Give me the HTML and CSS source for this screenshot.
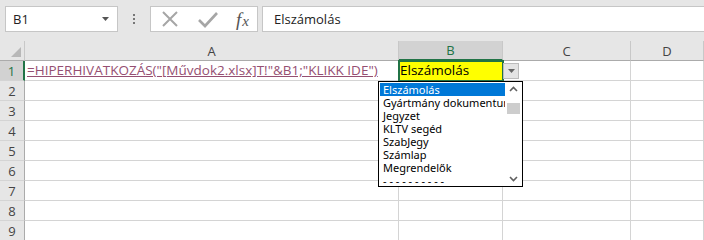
FILE: index.html
```html
<!DOCTYPE html>
<html>
<head>
  <title>Munkafüzet</title>
  <link rel="stylesheet" href="styles.css">
</head>
<body>
  <div class="toolbar">
    <div class="namebox">
      <span>B1</span>
      <svg class="nb-arrow" width="8" height="5" viewBox="0 0 8 5"><path d="M0 0h7L3.5 4z" fill="#555"/></svg>
    </div>
    <div class="grip"><i></i><i></i><i></i></div>
    <div class="fxbox">
      <svg width="18" height="18" viewBox="0 0 18 18"><path d="M2 2L16 16M16 2L2 16" stroke="#a6a6a6" stroke-width="2"/></svg>
      <svg width="22" height="18" viewBox="0 0 22 18"><path d="M2 10l6 6L20 3" stroke="#a6a6a6" stroke-width="2.6" fill="none"/></svg>
      <span class="fx"><i>f</i><i>x</i></span>
    </div>
    <div class="formula">Elszámolás</div>
  </div>

  <div class="sheet">
    <div class="corner"><svg width="10" height="10" viewBox="0 0 10 10"><path d="M10 0V10H0z" fill="#b8b8b8"/></svg></div>
    <div class="colhead">A</div>
    <div class="colhead active">B</div>
    <div class="colhead">C</div>
    <div class="colhead">D</div>

    <div class="rowhead active">1</div>
    <div class="cell"><span class="link">=HIPERHIVATKOZÁS("[Művdok2.xlsx]T!"&amp;B1;"KLIKK IDE")</span></div>
    <div class="cell selected">Elszámolás</div>
    <div class="cell"></div>
    <div class="cell"></div>

    <div class="rowhead">2</div><div class="cell"></div><div class="cell"></div><div class="cell"></div><div class="cell"></div>
    <div class="rowhead">3</div><div class="cell"></div><div class="cell"></div><div class="cell"></div><div class="cell"></div>
    <div class="rowhead">4</div><div class="cell"></div><div class="cell"></div><div class="cell"></div><div class="cell"></div>
    <div class="rowhead">5</div><div class="cell"></div><div class="cell"></div><div class="cell"></div><div class="cell"></div>
    <div class="rowhead">6</div><div class="cell"></div><div class="cell"></div><div class="cell"></div><div class="cell"></div>
    <div class="rowhead">7</div><div class="cell"></div><div class="cell"></div><div class="cell"></div><div class="cell"></div>
    <div class="rowhead">8</div><div class="cell"></div><div class="cell"></div><div class="cell"></div><div class="cell"></div>
    <div class="rowhead">9</div><div class="cell"></div><div class="cell"></div><div class="cell"></div><div class="cell"></div>

    <!-- validation dropdown button and list float over the grid -->
    <div class="dd-button">
      <svg width="7" height="4" viewBox="0 0 7 4"><path d="M0 0h7L3.5 4z" fill="#666"/></svg>
    </div>
    <div class="dd-list">
      <ul>
        <li class="hl">Elszámolás</li>
        <li>Gyártmány dokumentum</li>
        <li>Jegyzet</li>
        <li>KLTV segéd</li>
        <li>SzabJegy</li>
        <li>Számlap</li>
        <li>Megrendelők</li>
        <li>- - - - - - - - - -</li>
      </ul>
      <div class="scroll">
        <svg width="9" height="6" viewBox="0 0 9 6"><path d="M1 5L4.5 1.5L8 5" stroke="#606060" stroke-width="1.6" fill="none"/></svg>
        <div class="track"><div class="thumb"></div></div>
        <svg width="9" height="6" viewBox="0 0 9 6"><path d="M1 1L4.5 4.5L8 1" stroke="#606060" stroke-width="1.6" fill="none"/></svg>
      </div>
    </div>
  </div>
</body>
</html>
```

FILE: styles.css
```css
body {
  margin: 0;
  font-family: "Open Sans", "Noto Sans", sans-serif;
  background: #fff;
  width: 704px;
  height: 240px;
  overflow: hidden;
}

.toolbar {
  height: 41px;
  background: #e6e6e6;
  display: flex;
  align-items: flex-start;
  padding-top: 6px;
  box-sizing: border-box;
}

.namebox {
  margin-left: 5px;
  width: 113px;
  height: 26px;
  box-sizing: border-box;
  background: #fff;
  border: 1px solid #c6c6c6;
  display: flex;
  align-items: center;
  justify-content: space-between;
  padding: 0 7px 0 7px;
  font-size: 13px;
  color: #222;
}

.grip {
  width: 32px;
  height: 26px;
  display: flex;
  flex-direction: column;
  align-items: center;
  justify-content: center;
  gap: 2px;
}

.grip i {
  width: 2px;
  height: 2px;
  background: #777;
}

.fxbox {
  width: 108px;
  height: 26px;
  box-sizing: border-box;
  background: #fff;
  border: 1px solid #c6c6c6;
  display: flex;
  align-items: center;
  justify-content: space-between;
  padding: 0 8px 0 10px;
}

.fx {
  font-family: "Liberation Serif", serif;
  font-size: 19px;
  color: #555;
  font-style: italic;
  line-height: 1;
}

.fx i + i {
  font-size: 15px;
  margin-left: 1px;
}

.formula {
  margin-left: 4px;
  flex: 1;
  height: 26px;
  box-sizing: border-box;
  background: #fff;
  border: 1px solid #c6c6c6;
  border-right: none;
  padding-left: 11px;
  font-size: 13px;
  line-height: 24px;
  color: #222;
}

.sheet {
  position: relative;
  display: grid;
  grid-template-columns: 25px 374px 104px 128px 1fr;
  grid-template-rows: 20px repeat(9, 20px);
}

.corner,
.colhead,
.rowhead {
  background: #e6e6e6;
  border-right: 1px solid #c8c8c8;
  border-bottom: 1px solid #ababab;
  box-sizing: border-box;
  font-size: 13px;
  color: #444;
  display: flex;
  align-items: center;
  justify-content: center;
}

.corner {
  align-items: flex-end;
  justify-content: flex-end;
  padding: 0 3px 3px 0;
}

.colhead.active {
  background: #d2d2d2;
  color: #217346;
  border-bottom: 2px solid #217346;
}

.rowhead {
  border-bottom: 1px solid #d4d4d4;
  border-right: 1px solid #ababab;
}

.rowhead.active {
  background: #d2d2d2;
  color: #217346;
  border-right: 2px solid #217346;
}

.cell {
  border-right: 1px solid #d4d4d4;
  border-bottom: 1px solid #d4d4d4;
  box-sizing: border-box;
  font-size: 13.5px;
  line-height: 19px;
  padding-left: 2px;
  white-space: nowrap;
  color: #000;
}

.link {
  color: #954f72;
  text-decoration: underline;
}

.cell.selected {
  background: #ffff00;
  outline: 2px solid #217346;
  outline-offset: -1px;
  padding-left: 1px;
  position: relative;
}

.dd-button {
  position: absolute;
  left: 503px;
  top: 22px;
  width: 16px;
  height: 16px;
  box-sizing: border-box;
  background: #e4e4e4;
  border: 1px solid #bcbcbc;
  display: flex;
  align-items: center;
  justify-content: center;
}

.dd-list {
  position: absolute;
  left: 378px;
  top: 40px;
  width: 145px;
  height: 106px;
  box-sizing: border-box;
  background: #fff;
  border: 1px solid #000;
  display: flex;
}

.dd-list ul {
  list-style: none;
  margin: 0;
  padding: 1px 0 0 1px;
  flex: 1;
  overflow: hidden;
  font-family: "Noto Sans", sans-serif;
  font-size: 11px;
  line-height: 13px;
  color: #000;
}

.dd-list li {
  padding-left: 3px;
  white-space: nowrap;
}

.dd-list li.hl {
  background: #0078d7;
  color: #fff;
}

.scroll {
  width: 17px;
  display: flex;
  flex-direction: column;
  align-items: center;
  padding: 4px 0;
  box-sizing: border-box;
  background: #fff;
}

.track {
  flex: 1;
  width: 100%;
  padding-top: 11px;
}

.thumb {
  width: 13px;
  margin-left: 2px;
  height: 11px;
  background: #cdcdcd;
}
```
